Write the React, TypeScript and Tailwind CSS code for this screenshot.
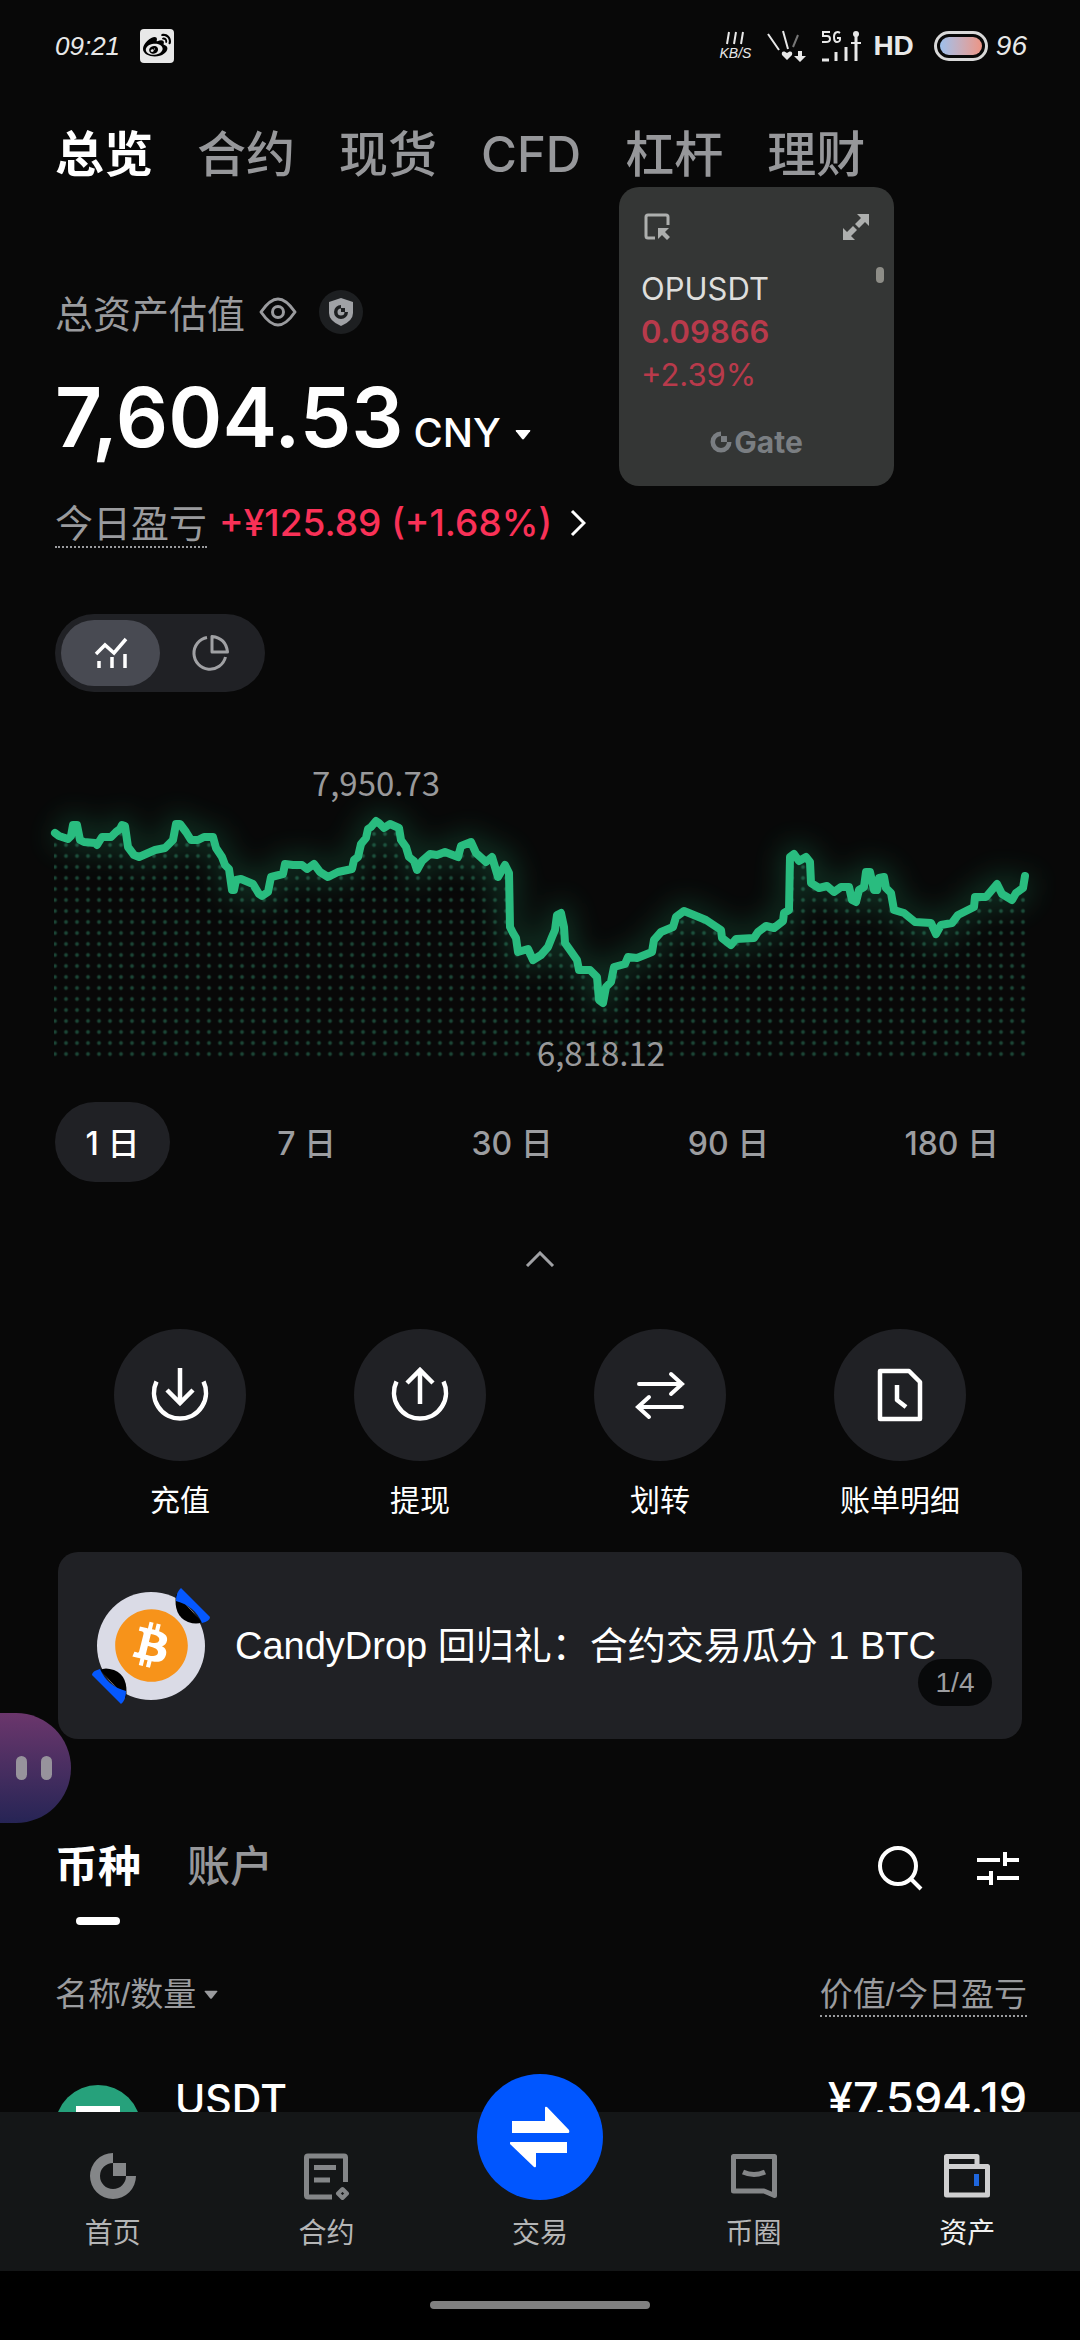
import { useState } from "react";
import type { ReactNode } from "react";
import { FaBitcoin, FaWeibo } from "react-icons/fa";

const tabs = ["总览", "合约", "现货", "CFD", "杠杆", "理财"];
const periods = ["1 日", "7 日", "30 日", "90 日", "180 日"];

const linePoints =
  "55,81 59,84 68,87 71,84 73,73 77,73 80,88 84,90 95,91 97,93 102,85 111,85 116,80 120,77 122,73 125,74 128,95 134,103 139,105 155,98 165,96 173,88 176,72 180,72 186,80 191,88 198,88 204,85 213,85 216,96 222,105 225,113 229,117 232,138 234,138 236,128 241,127 253,132 259,142 262,144 268,140 271,125 283,122 285,112 293,113 302,113 307,117 314,112 320,120 328,125 338,120 352,117 354,108 358,105 361,92 366,86 368,77 371,75 376,69 379,71 384,76 390,72 399,76 401,88 406,95 409,105 414,109 417,118 422,109 430,102 437,103 445,100 458,105 461,94 471,90 476,101 486,110 492,105 498,125 505,113 509,121 510,175 513,181 516,186 518,200 528,197 533,208 541,203 548,195 552,185 555,178 557,163 561,161 564,175 565,191 570,198 577,208 579,218 590,218 597,225 599,248 603,251 606,235 611,230 614,215 625,212 628,205 637,206 652,200 654,188 661,180 673,175 676,165 684,159 706,168 721,178 722,186 731,193 736,187 754,186 758,180 766,174 774,176 783,169 784,161 789,158 790,105 794,102 799,109 806,105 810,110 811,131 819,136 827,134 834,140 841,135 849,135 852,148 856,150 859,138 864,135 866,120 870,120 874,138 877,138 879,126 884,125 886,136 891,141 894,158 904,161 915,170 931,171 936,182 941,173 952,171 958,163 974,155 975,145 986,145 997,132 1002,142 1012,148 1016,141 1023,136 1025,124";

function GateMark({ className }: { className?: string }) {
  return (
    <svg viewBox="0 0 48 48" className={className} fill="currentColor">
      <path d="M24 1A23 23 0 1 0 47 24H37A13 13 0 1 1 24 11Z" />
      <rect x="24" y="11" width="13" height="13" />
    </svg>
  );
}

function Caret({ className }: { className?: string }) {
  return (
    <svg viewBox="0 0 16 10" className={className} fill="currentColor">
      <path d="M1.500 0h13q1.500 0 .6 1.200l-6 7.600q-1.100 1.200-2.200 0l-6-7.600Q0 0 1.500 0Z" />
    </svg>
  );
}

function StatusBar() {
  return (
    <div className="flex h-[92px] shrink-0 items-center pr-[53px] pl-[55px] text-[#e8e8e8]">
      <span className="text-[26px] leading-9 italic">09:21</span>
      <span className="ml-5 flex h-[34px] w-[34px] items-center justify-center rounded-sm bg-[#e8e8e8] text-black">
        <FaWeibo className="h-7 w-7" />
      </span>

      <div className="ml-auto flex items-center">
        <div className="flex flex-col items-center text-[14px] leading-4 italic">
          <svg viewBox="0 0 20 14" className="h-[14px] w-5" stroke="currentColor" strokeWidth="2" fill="none">
            <path d="M4 1 2 13M11 1 9 13M18 1l-2 12" />
          </svg>
          <span>KB/S</span>
        </div>
        <svg viewBox="0 0 40 32" className="ml-4 h-8 w-10" stroke="currentColor" fill="none">
          <path d="M1 4 12 20M16 1l5 18" strokeWidth="2" />
          <path d="m31 5-5 12" strokeWidth="2" stroke="#777777" />
          <path d="M20 30l-5-5q-1-4 2.500-3.500L20 23l2.500-1.500Q26 21 25 25Z" fill="currentColor" stroke="none" />
          <path d="M31 21h4v5h4l-6 6-6-6h4Z" fill="currentColor" stroke="none" />
        </svg>
        <svg viewBox="0 0 40 32" className="ml-3.5 h-8 w-10" stroke="currentColor" fill="none" strokeWidth="3">
          <path d="M1 30h7M15 31v-9M25 31V17M35 31V6" />
          <path d="M30 13h10M35 2v4" strokeWidth="2" />
          <circle cx="35" cy="4" r="3" fill="currentColor" stroke="none" />
          <path d="M9 2H2v4h4q3 0 3 3t-4 3H1M19 3q-2-1.500-4-.5-2 1-2 4.500 0 5 3 5 3.500 0 3-4h-3" strokeWidth="2" />
        </svg>
        <span className="ml-3 text-[28px] leading-9 font-bold">HD</span>
        <span className="ml-5 flex h-[30px] w-[54px] rounded-full border-[3px] border-[#d8d8d8] p-[3px]">
          <span className="flex-1 rounded-full bg-linear-to-r from-[#9cc0ec] to-[#ec9484]" />
        </span>
        <span className="ml-2 text-[28px] leading-9 italic">96</span>
      </div>
    </div>
  );
}

function FloatingQuote() {
  return (
    <aside className="absolute top-[187px] right-[186px] z-20 flex h-[299px] w-[275px] flex-col rounded-[20px] bg-[#343635] px-[22px] pt-6 pb-7 font-['Inter',sans-serif]">
      <div className="flex items-center justify-between text-[#adafae]">
        <svg viewBox="0 0 32 32" className="h-8 w-8" fill="none" stroke="currentColor" strokeWidth="3">
          <path d="M14 27H7q-2 0-2-2V6q0-2 2-2h18q2 0 2 2v8" />
          <path d="M17 17h11l-4 4 5 5-3 3-5-5-4 4Z" fill="currentColor" stroke="none" />
        </svg>
        <svg viewBox="0 0 32 32" className="h-8 w-8" fill="currentColor">
          <path d="M17 3h12v12l-4-4-6 6-4-4 6-6ZM3 29V17l4 4 6-6 4 4-6 6 4 4Z" />
        </svg>
      </div>
      <div className="mt-6 flex justify-between text-[31px] leading-[43px]">
        <div className="text-[#b83a4b]">
          <p className="text-[#dededc]">OPUSDT</p>
          <p className="font-semibold">0.09866</p>
          <p>+2.39%</p>
        </div>
        <span className="-mr-3 h-4 w-2 rounded-full bg-[#8d8d87]" />
      </div>
      <div className="mt-auto flex items-center justify-center text-[#7a7e82]">
        <GateMark className="h-[22px] w-[22px]" />
        <span className="ml-0.5 text-[30px] leading-8 font-bold">Gate</span>
      </div>
    </aside>
  );
}

function Overview() {
  return (
    <section className="pr-[53px] pl-[55px]">
      <div className="mt-[103px] flex h-11 items-center text-[#9a9b9e]">
        <span className="pt-1.5 text-[38px] leading-11">总资产估值</span>
        <button aria-label="隐藏资产" className="ml-3.5">
          <svg viewBox="0 0 38 30" className="h-[30px] w-[38px]" fill="none" stroke="currentColor" strokeWidth="3">
            <path d="M2 15Q11 2 19 2t17 13Q27 28 19 28T2 15Z" strokeLinejoin="round" />
            <circle cx="19" cy="15" r="5.500" />
          </svg>
        </button>
        <span className="ml-[22px] flex h-11 w-11 items-center justify-center rounded-full bg-[#1d1f21]">
          <svg viewBox="0 0 26 28" className="h-7 w-[26px]">
            <path d="M13 0 25 4v11q0 8-12 13Q1 23 1 15V4Z" fill="#a0a2a6" />
            <path d="M13 7a7 7 0 1 0 7 7h-3.500a3.500 3.500 0 1 1-3.500-3.500Z" fill="#1d1f21" />
            <rect x="13" y="10" width="4" height="4" fill="#1d1f21" />
          </svg>
        </span>
      </div>

      <div className="mt-10 flex items-baseline font-['Inter',sans-serif] text-white">
        <strong className="text-[82px] leading-[88px] font-semibold">7,604.53</strong>
        <button className="ml-2.5 flex items-center gap-3.5 text-[40px] leading-12 font-medium">
          CNY
          <Caret className="mt-1 h-[10px] w-4" />
        </button>
      </div>

      <div className="mt-[37px] flex h-12 items-center">
        <span className="border-b-2 border-dotted border-[#9a9b9e] pt-1 text-[38px] leading-11 text-[#9a9b9e]">今日盈亏</span>
        <a href="#pnl" className="ml-3 flex items-center text-[#f93157]">
          <span className="font-['Inter',sans-serif] text-[37px] leading-11 font-medium">+¥125.89 (+1.68%)</span>
          <svg viewBox="0 0 16 28" className="ml-[18px] h-7 w-4 text-white" fill="none" stroke="currentColor" strokeWidth="3">
            <path d="m2 2 12 12L2 26" />
          </svg>
        </a>
      </div>

      <div className="mt-[67px] flex h-[78px] w-[210px] rounded-full bg-[#202125] p-1.5">
        <button aria-label="走势图" className="flex w-[99px] items-center justify-center rounded-full bg-[#484a52] text-white">
          <svg viewBox="0 0 34 34" className="h-[34px] w-[34px]" fill="none" stroke="currentColor">
            <path d="m2 18 9-9 9 8L32 3M5 25v7M18 21v11M31 18v14" strokeWidth="3.500" />
          </svg>
        </button>
        <button aria-label="资产分布" className="flex flex-1 items-center justify-center text-[#a0a1a4]">
          <svg viewBox="0 0 38 38" className="h-[38px] w-[38px]" fill="none" stroke="currentColor" strokeWidth="3">
            <path d="M16 3.500A16 16 0 1 0 34.500 23" />
            <path d="M21 2.500V18h15.500Q35 4 21 2.500Z" strokeLinejoin="round" />
          </svg>
        </button>
      </div>
    </section>
  );
}

function Chart() {
  const [period, setPeriod] = useState(0);

  return (
    <section>
      <svg viewBox="0 0 1080 330" className="mt-[60px] block w-full">
        <defs>
          <pattern id="dots" x="49.500" y="296.500" width="11" height="11" patternUnits="userSpaceOnUse">
            <circle cx="5.500" cy="5.500" r="1.900" fill="#1b4435" />
          </pattern>
          <filter id="glow" x="-10%" y="-30%" width="120%" height="160%">
            <feGaussianBlur stdDeviation="14" />
          </filter>
          <clipPath id="area">
            <polygon points={`54,308 54,92 ${linePoints} 1028,308`} />
          </clipPath>
        </defs>
        <rect x="54" y="60" width="974" height="248" fill="url(#dots)" clipPath="url(#area)" />
        <polyline points={linePoints} fill="none" stroke="#29bc7f" strokeWidth="18" opacity="0.24" filter="url(#glow)" />
        <polyline points={linePoints} fill="none" stroke="#29bc7f" strokeWidth="8" strokeLinecap="round" strokeLinejoin="round" />
        <g className="font-['Noto_Sans_CJK_SC',sans-serif] text-[33px]" fill="#99999b" textAnchor="middle">
          <text x="376" y="44">7,950.73</text>
          <text x="601" y="314">6,818.12</text>
        </g>
      </svg>

      <div className="mt-5 flex justify-between pr-[53px] pl-[55px]">
        {periods.map((label, i) => (
          <button
            key={label}
            onClick={() => setPeriod(i)}
            className={`h-20 min-w-[115px] rounded-full px-7 pt-1 font-['Inter','Noto_Sans_CJK_SC',sans-serif] text-[32px] font-medium ${i === period ? "bg-[#202125] text-white" : "text-[#9c9da0]"}`}
          >
            {label}
          </button>
        ))}
      </div>

      <button aria-label="收起" className="mx-auto mt-[57px] flex h-10 w-16 items-center justify-center text-[#a0a1a4]">
        <svg viewBox="0 0 30 16" className="h-4 w-[30px]" fill="none" stroke="currentColor" strokeWidth="3">
          <path d="M2 15 15 2l13 13" />
        </svg>
      </button>
    </section>
  );
}

const actions: { label: string; icon: ReactNode }[] = [
  { label: "充值", icon: <path d="M30 3v34M17 25l13 13 13-13M6.500 16.500A26 26 0 1 0 53.500 16.500" /> },
  { label: "提现", icon: <path d="M30 39V5M17 18 30 5l13 13M6.500 16.500A26 26 0 1 0 53.500 16.500" /> },
  { label: "划转", icon: <path d="M9 19h43M41 9l11 10-11 10M52 42H9M19 32 8 42l11 10" strokeLinecap="round" strokeWidth="4" /> },
  { label: "账单明细", icon: <path d="M10 6h29l11 11v37H10ZM27 20v15l9 7" strokeLinejoin="round" /> },
];

function Actions() {
  return (
    <div className="mt-[50px] grid grid-cols-4 px-[60px]">
      {actions.map((a) => (
        <button key={a.label} className="flex flex-col items-center text-white">
          <span className="flex h-[132px] w-[132px] items-center justify-center rounded-full bg-[#202125]">
            <svg viewBox="0 0 60 60" className="h-[60px] w-[60px]" fill="none" stroke="currentColor" strokeWidth="4.500">
              {a.icon}
            </svg>
          </span>
          <span className="mt-5 text-[30px] leading-10">{a.label}</span>
        </button>
      ))}
    </div>
  );
}

function Banner() {
  return (
    <a href="#candydrop" className="relative mx-[58px] mt-[31px] flex h-[187px] items-center rounded-[20px] bg-[#202125] px-[33px] text-white">
      <span className="relative flex h-[120px] w-[120px] shrink-0 items-center justify-center">
        <svg viewBox="0 0 120 120" className="absolute inset-0">
          <circle cx="60" cy="60" r="54" fill="#dadbe6" />
          <g id="ribbon">
            <path d="M85 8Q82 30 97 36q9 3 14 0Z" fill="#000000" />
            <path d="M90 2 119 31q0 4-8 6-7-17-26-22 0-9 5-13Z" fill="#0558fe" />
          </g>
          <use href="#ribbon" transform="rotate(180 60 60)" />
          <circle cx="60" cy="60" r="34" fill="#ffffff" />
        </svg>
        <FaBitcoin className="relative h-[75px] w-[75px] text-[#f7931a]" />
      </span>
      <span className="ml-6 text-[38px] leading-12 whitespace-nowrap">CandyDrop 回归礼：合约交易瓜分 1 BTC</span>
      <span className="absolute right-[30px] bottom-[33px] flex h-[47px] w-[74px] items-center justify-center rounded-full bg-[#08090a] text-[28px] text-[#9c9da0]">
        1/4
      </span>
    </a>
  );
}

function Holdings() {
  return (
    <section className="pr-[53px] pl-[55px]">
      <div className="mt-[98px] flex items-start text-[43px] leading-[60px]">
        <button className="flex flex-col items-center font-bold text-white">
          币种
          <span className="mt-5 h-2 w-11 rounded-full bg-white" />
        </button>
        <button className="ml-[46px] font-medium text-[#96979a]">账户</button>
        <div className="mt-2 mr-2 ml-auto flex items-center gap-[54px] text-white">
          <button aria-label="搜索">
            <svg viewBox="0 0 46 46" className="h-[46px] w-[46px]" fill="none" stroke="currentColor" strokeWidth="4">
              <circle cx="21" cy="21" r="18" />
              <path d="m34 34 10 10" />
            </svg>
          </button>
          <button aria-label="筛选">
            <svg viewBox="0 0 42 34" className="h-[34px] w-[42px]" fill="none" stroke="currentColor" strokeWidth="4">
              <path d="M0 9h23M28 1v14M28 9h14M0 27h14M14 20v14M20 27h22" />
            </svg>
          </button>
        </div>
      </div>

      <div className="mt-11 flex items-start justify-between text-[33px] leading-10 text-[#9a9b9e]">
        <button className="flex items-center gap-2 pt-1.5">
          名称/数量
          <Caret className="h-[10px] w-[14px]" />
        </button>
        <span className="border-b-2 border-dotted border-[#9a9b9e] pt-1.5">价值/今日盈亏</span>
      </div>

      <div className="mt-[62px] flex items-start font-['Inter',sans-serif] leading-10 font-medium text-white">
        <svg viewBox="0 0 86 86" className="mt-1.5 h-[86px] w-[86px]">
          <circle cx="43" cy="43" r="43" fill="#26a17b" />
          <path d="M21 21h44v13H50v35H36V34H21Z" fill="#ffffff" />
        </svg>
        <span className="ml-[34px] text-[41px]">USDT</span>
        <span className="ml-auto text-[45px]">¥7,594.19</span>
      </div>
    </section>
  );
}

function NavItem({ label, active, children }: { label: string; active?: boolean; children: ReactNode }) {
  return (
    <a href={`#${label}`} className={`flex flex-col items-center ${active ? "text-[#cfcfd0]" : "text-[#848688]"}`}>
      {children}
      <span className={`mt-3.5 text-[28px] leading-10 ${active ? "text-[#f0f0f0]" : "text-[#b4b5b6]"}`}>{label}</span>
    </a>
  );
}

function BottomNav() {
  return (
    <footer className="relative z-10 shrink-0 bg-black">
      <nav className="grid h-[159px] grid-cols-5 bg-[#141617] px-1.5 pt-10">
        <NavItem label="首页">
          <GateMark className="h-12 w-12" />
        </NavItem>
        <NavItem label="合约">
          <svg viewBox="0 0 48 48" className="h-12 w-12" fill="none" stroke="currentColor" strokeWidth="5">
            <path d="M30 45H6q-1.500 0-1.500-1.500v-38Q4.500 4 6 4h36q1.500 0 1.500 1.500V30M12 15.500h22M12 28h16" />
            <path d="m40.500 37 4.500 4.500-4.500 4.500-4.500-4.500Z" strokeWidth="4" strokeLinejoin="round" />
          </svg>
        </NavItem>
        <NavItem label="交易">
          <span className="-mt-[78px] flex h-[126px] w-[126px] items-center justify-center rounded-full bg-[#0056ff] text-white">
            <svg viewBox="0 0 60 62" className="h-[62px] w-[60px]" fill="currentColor">
              <path d="M2 15h33V2q0-2 2-1l22 23q1 3-1 3H2ZM57 47H26v13q0 2-2 1L0 38q-1-2 1-2h56Z" />
            </svg>
          </span>
        </NavItem>
        <NavItem label="币圈">
          <svg viewBox="0 0 48 48" className="h-12 w-12" fill="none" stroke="currentColor" strokeWidth="5" strokeLinejoin="round">
            <path d="M3.500 4.500h41v39L34 39H3.500Z" />
            <path d="M13 20q11 5 22 0" />
          </svg>
        </NavItem>
        <NavItem label="资产" active>
          <svg viewBox="0 0 48 48" className="h-12 w-12" fill="none" stroke="currentColor" strokeWidth="5" strokeLinejoin="round">
            <path d="M3.500 14.500h41v28.500h-41ZM3.500 14.500v-10H34v10" />
            <path d="M33.500 22v12" stroke="#1f66dd" />
          </svg>
        </NavItem>
      </nav>
      <div className="flex h-[69px] justify-center pt-[30px]">
        <span className="h-2 w-[220px] rounded-full bg-[#808080]" />
      </div>
    </footer>
  );
}

function App() {
  const [tab, setTab] = useState(0);

  return (
    <div className="relative flex h-screen flex-col overflow-hidden bg-[#080808] font-['Liberation_Sans','Noto_Sans_CJK_SC',sans-serif]">
      <StatusBar />
      <main className="min-h-0 flex-1 overflow-hidden">
        <div className="mt-[31px] flex gap-11 pr-[53px] pl-[55px] font-['Inter','Noto_Sans_CJK_SC',sans-serif] text-[49px] leading-[64px]">
          {tabs.map((name, i) => (
            <button
              key={name}
              onClick={() => setTab(i)}
              className={i === tab ? "font-bold text-white" : "font-medium text-[#96979a]"}
            >
              {name}
            </button>
          ))}
        </div>
        <Overview />
        <Chart />
        <Actions />
        <Banner />
        <Holdings />
      </main>
      <BottomNav />

      <FloatingQuote />
      {/* floating assistant docked to the left edge */}
      <button
        aria-label="暂停"
        className="absolute top-[1713px] left-0 z-20 flex h-[110px] w-[71px] items-center gap-3.5 rounded-r-full bg-linear-to-b from-[#6b366c] to-[#262455] pl-4"
      >
        <span className="h-6 w-[11px] rounded-full bg-[#97939c]" />
        <span className="h-6 w-[11px] rounded-full bg-[#97939c]" />
      </button>
    </div>
  );
}

export default App;
